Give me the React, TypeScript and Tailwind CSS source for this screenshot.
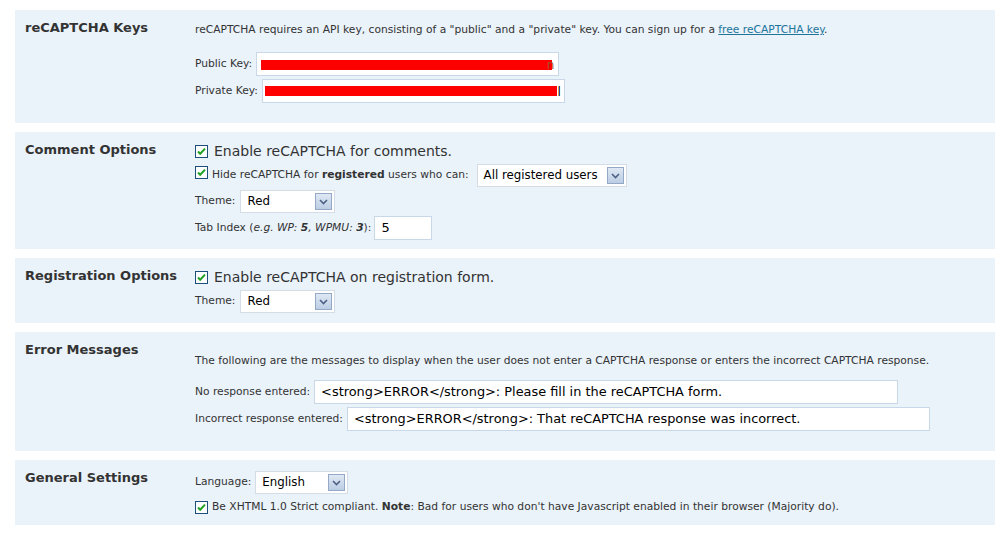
import React from 'react'

const font = { fontFamily: '"DejaVu Sans", Verdana, sans-serif' }

function Check() {
  return (
    <svg width="13" height="13" viewBox="0 0 13 13" className="shrink-0">
      <rect x="0.5" y="0.5" width="12" height="12" fill="#fff" stroke="#1c4f7c" />
      <path d="M3 6.5 L5.2 8.8 L10 3.6" fill="none" stroke="#21a121" strokeWidth="2" />
    </svg>
  )
}

function Select({ value, width }: { value: string; width: string }) {
  return (
    <div className={`flex h-[23px] items-center justify-between border border-[#d4dde6] bg-white pl-[6px] pr-[2px] ${width}`}>
      <span className="text-[11.8px] text-black">{value}</span>
      <span className="flex h-[17px] w-[17px] items-center justify-center border border-[#93a9c5] bg-gradient-to-b from-[#dfe8f4] to-[#bccde4]">
        <svg width="9" height="6" viewBox="0 0 9 6">
          <path d="M1 1 L4.5 4.5 L8 1" fill="none" stroke="#4d6185" strokeWidth="1.6" />
        </svg>
      </span>
    </div>
  )
}

function TextBox({ value, width, children }: { value?: string; width: string; children?: React.ReactNode }) {
  return (
    <div className={`relative flex h-[24px] items-center border border-[#c9d8e8] bg-white px-[6px] text-[12.9px] text-black ${width}`}>
      {value}
      {children}
    </div>
  )
}

function Panel({ title, children, className }: { title: string; children: React.ReactNode; className: string }) {
  return (
    <div className={`flex bg-[#eaf2fa] ${className}`}>
      <div className="w-[180px] shrink-0 pl-[10px] pt-[10px] text-[13px] font-bold leading-[16px] text-[#333]">{title}</div>
      <div className="flex flex-col text-[10.7px] text-[#333]">{children}</div>
    </div>
  )
}

export default function App() {
  return (
    <div style={font} className="flex min-h-screen flex-col gap-[9px] bg-white pl-[15px] pr-[10px] pt-[10px]">
      <Panel title="reCAPTCHA Keys" className="h-[113px]">
        <div className="mt-[13px] leading-[14px]">
          reCAPTCHA requires an API key, consisting of a &quot;public&quot; and a &quot;private&quot; key. You can sign up for a{' '}
          <span className="text-[#21759b] underline">free reCAPTCHA key</span>.
        </div>
        <div className="mt-[15px] flex items-center gap-[4px]">
          <span>Public Key:</span>
          <TextBox width="w-[303px]">
            <span className="absolute left-[4px] top-[7px] h-[10px] w-[291px] bg-[#ff0000]" />
            <span className="absolute right-[4px] top-[3px] text-[12px] text-[#a0522d]">n</span>
          </TextBox>
        </div>
        <div className="mt-[3px] flex items-center gap-[4px]">
          <span>Private Key:</span>
          <TextBox width="w-[303px]">
            <span className="absolute left-[2px] top-[6px] h-[10px] w-[292px] bg-[#ff0000]" />
            <span className="absolute right-[3px] top-[3px] text-[12px]">l</span>
          </TextBox>
        </div>
      </Panel>

      <Panel title="Comment Options" className="h-[117px]">
        <div className="mt-[10px] flex h-[18px] items-center gap-[6px] text-[14px]">
          <Check />
          <span>Enable reCAPTCHA for comments.</span>
        </div>
        <div className="mt-[4px] flex h-[23px] items-center gap-[4px]">
          <span className="-mt-[6px]"><Check /></span>
          <span className="mr-[4px]">
            Hide reCAPTCHA for <b>registered</b> users who can:
          </span>
          <Select value="All registered users" width="w-[150px]" />
        </div>
        <div className="mt-[3px] flex items-center gap-[5px]">
          <span>Theme:</span>
          <Select value="Red" width="w-[95px]" />
        </div>
        <div className="mt-[3px] flex items-center gap-[3px]">
          <span>
            Tab Index (<i>e.g. WP: <b>5</b>, WPMU: <b>3</b></i>):
          </span>
          <TextBox value="5" width="w-[58px]" />
        </div>
      </Panel>

      <Panel title="Registration Options" className="h-[65px]">
        <div className="mt-[10px] flex h-[18px] items-center gap-[6px] text-[14px]">
          <Check />
          <span>Enable reCAPTCHA on registration form.</span>
        </div>
        <div className="mt-[4px] flex items-center gap-[5px]">
          <span>Theme:</span>
          <Select value="Red" width="w-[95px]" />
        </div>
      </Panel>

      <Panel title="Error Messages" className="h-[119px]">
        <div className="mt-[22px] leading-[14px]">
          The following are the messages to display when the user does not enter a CAPTCHA response or enters the incorrect CAPTCHA response.
        </div>
        <div className="mt-[12px] flex items-center gap-[4px]">
          <span>No response entered:</span>
          <TextBox value="<strong>ERROR</strong>: Please fill in the reCAPTCHA form." width="w-[584px]" />
        </div>
        <div className="mt-[3px] flex items-center gap-[4px]">
          <span>Incorrect response entered:</span>
          <TextBox value="<strong>ERROR</strong>: That reCAPTCHA response was incorrect." width="w-[583px]" />
        </div>
      </Panel>

      <Panel title="General Settings" className="h-[65px]">
        <div className="mt-[11px] flex items-center gap-[4px]">
          <span>Language:</span>
          <Select value="English" width="w-[93px]" />
        </div>
        <div className="mt-[5px] flex items-center gap-[4px]">
          <Check />
          <span>
            Be XHTML 1.0 Strict compliant. <b>Note</b>: Bad for users who don&apos;t have Javascript enabled in their browser (Majority do).
          </span>
        </div>
      </Panel>
    </div>
  )
}
